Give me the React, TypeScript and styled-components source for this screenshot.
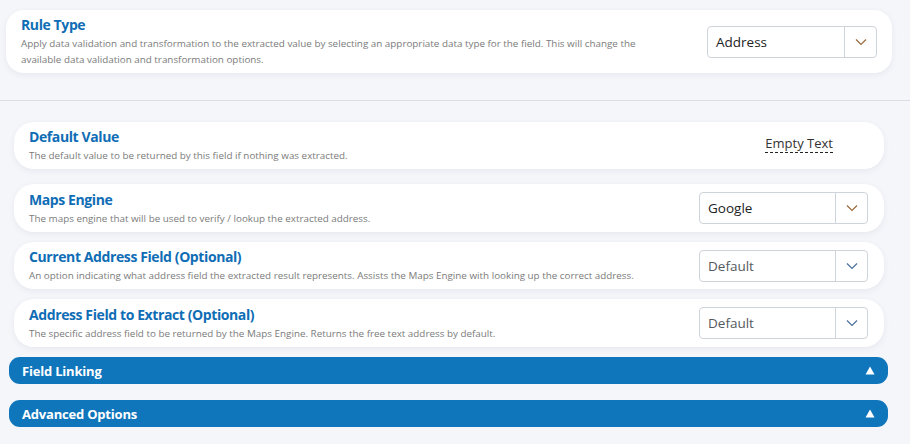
import React from "react";
import styled, { createGlobalStyle } from "styled-components";

const GlobalStyle = createGlobalStyle`
  html, body {
    margin: 0;
    padding: 0;
    background: #f5f6fa;
    font-family: "Open Sans", "Noto Sans", sans-serif;
  }
`;

const Page = styled.div`
  width: 910px;
  height: 444px;
  overflow: hidden;
  background: #f5f6fa;
`;

const TopSection = styled.div`
  padding: 10px 18px 0 6px;
`;

const Divider = styled.hr`
  margin: 27px 0 0;
  border: 0;
  border-top: 1px solid #dcdde3;
`;

const BottomSection = styled.div`
  padding: 21px 22px 0 9px;
  display: flex;
  flex-direction: column;
`;

const Card = styled.div<{ $height: number; $gap: number }>`
  display: flex;
  align-items: center;
  justify-content: space-between;
  height: ${({ $height }) => $height}px;
  margin-bottom: ${({ $gap }) => $gap}px;
  padding: 0 15px;
  background: #ffffff;
  border-radius: 20px;
  box-shadow: 0 2px 6px rgba(40, 50, 80, 0.07);
`;

const RuleCard = styled(Card)`
  border-radius: 18px;
`;

const FieldCard = styled(Card)`
  margin-left: 5px;
  margin-right: 4px;
  padding-right: 16px;
`;

const Info = styled.div`
  display: flex;
  flex-direction: column;
`;

const Title = styled.div`
  color: #0f6db5;
  font-size: 14px;
  font-weight: 700;
  line-height: 17px;
  letter-spacing: -0.4px;
`;

const Description = styled.div<{ $width?: number }>`
  margin-top: 2px;
  color: #7b7b7b;
  font-size: 9.85px;
  line-height: 16px;
  max-width: ${({ $width }) => ($width ? `${$width}px` : "none")};
`;

const Select = styled.div<{ $width: number; $muted?: boolean }>`
  display: flex;
  align-items: stretch;
  width: ${({ $width }) => $width}px;
  height: 32px;
  box-sizing: border-box;
  border: 1px solid #cfd3da;
  border-radius: 4px;
  background: #ffffff;
  color: ${({ $muted }) => ($muted ? "#555a60" : "#222222")};
  font-size: 13.5px;
`;

const SelectValue = styled.div`
  flex: 1;
  display: flex;
  align-items: center;
  padding-left: 8px;
`;

const SelectArrow = styled.div`
  width: 31px;
  display: flex;
  align-items: center;
  justify-content: center;
  border-left: 1px solid #cfd3da;
`;

const EmptyText = styled.div`
  margin-right: 35px;
  margin-top: -3px;
  color: #333333;
  font-size: 13px;
  line-height: 17px;
  border-bottom: 1px dashed #222222;
`;

const Bar = styled.div<{ $gap: number }>`
  display: flex;
  align-items: center;
  justify-content: space-between;
  height: 27px;
  margin-bottom: ${({ $gap }) => $gap}px;
  padding: 0 13px;
  background: #0f76bc;
  border-radius: 11px;
  color: #ffffff;
  font-size: 13px;
  font-weight: 700;
  letter-spacing: -0.2px;
`;

const Chevron: React.FC<{ color: string }> = ({ color }) => (
  <svg width="12" height="8" viewBox="0 0 12 8">
    <path d="M1 1.5 L6 6.5 L11 1.5" fill="none" stroke={color} strokeWidth="1.2" />
  </svg>
);

const Triangle = () => (
  <svg width="10" height="9" viewBox="0 0 10 9">
    <path d="M5 0.5 L9.5 8.5 L0.5 8.5 Z" fill="#ffffff" />
  </svg>
);

type Field = {
  title: string;
  description: string;
  value?: string;
  muted?: boolean;
  height: number;
  gap: number;
};

const fields: Field[] = [
  {
    title: "Maps Engine",
    description:
      "The maps engine that will be used to verify / lookup the extracted address.",
    value: "Google",
    height: 48,
    gap: 10,
  },
  {
    title: "Current Address Field (Optional)",
    description:
      "An option indicating what address field the extracted result represents. Assists the Maps Engine with looking up the correct address.",
    value: "Default",
    muted: true,
    height: 47,
    gap: 10,
  },
  {
    title: "Address Field to Extract (Optional)",
    description:
      "The specific address field to be returned by the Maps Engine. Returns the free text address by default.",
    value: "Default",
    muted: true,
    height: 48,
    gap: 10,
  },
];

const App: React.FC = () => (
  <Page>
    <GlobalStyle />
    <TopSection>
      <RuleCard $height={63} $gap={0}>
        <Info>
          <Title>Rule Type</Title>
          <Description $width={625}>
            Apply data validation and transformation to the extracted value by
            selecting an appropriate data type for the field. This will change
            the available data validation and transformation options.
          </Description>
        </Info>
        <Select $width={170}>
          <SelectValue>Address</SelectValue>
          <SelectArrow>
            <Chevron color="#9a6a3c" />
          </SelectArrow>
        </Select>
      </RuleCard>
    </TopSection>
    <Divider />
    <BottomSection>
      <FieldCard $height={47} $gap={15}>
        <Info>
          <Title>Default Value</Title>
          <Description>
            The default value to be returned by this field if nothing was
            extracted.
          </Description>
        </Info>
        <EmptyText>Empty Text</EmptyText>
      </FieldCard>
      {fields.map((f) => (
        <FieldCard key={f.title} $height={f.height} $gap={f.gap}>
          <Info>
            <Title>{f.title}</Title>
            <Description>{f.description}</Description>
          </Info>
          <Select $width={169} $muted={f.muted}>
            <SelectValue>{f.value}</SelectValue>
            <SelectArrow>
              <Chevron color={f.muted ? "#4a6f9a" : "#9a6a3c"} />
            </SelectArrow>
          </Select>
        </FieldCard>
      ))}
      <Bar $gap={16}>
        <span>Field Linking</span>
        <Triangle />
      </Bar>
      <Bar $gap={0}>
        <span>Advanced Options</span>
        <Triangle />
      </Bar>
    </BottomSection>
  </Page>
);

export default App;
